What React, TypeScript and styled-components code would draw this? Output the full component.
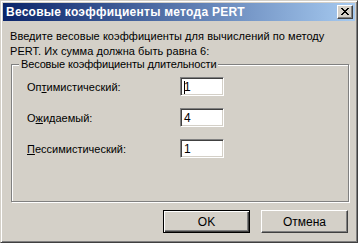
import React from 'react';
import styled, {createGlobalStyle} from "styled-components";

const Global = createGlobalStyle`
  html, body {
    margin: 0;
    padding: 0;
    background: #d4d0c8;
  }
  * {
    box-sizing: border-box;
  }
`
const Window = styled.div`
  width: 358px;
  height: 243px;
  background-color: #d4d0c8;
  border: 1px solid;
  border-color: #d4d0c8 #404040 #404040 #d4d0c8;
  box-shadow: inset 1px 1px 0 #fff, inset -1px -1px 0 #808080;
  padding: 2px;
  display: flex;
  flex-direction: column;
  font-family: "Liberation Sans", Arial, sans-serif;
  font-size: 11px;
  color: #000;
`
const TitleBar = styled.div`
  height: 18px;
  background: linear-gradient(to right, #0a246a, #a6caf0);
  display: flex;
  align-items: center;
  justify-content: space-between;
  padding: 0 2px 0 3px;
`
const Title = styled.span`
  color: #fff;
  font-weight: bold;
  font-size: 12px;
  letter-spacing: 0.25px;
`
const CloseButton = styled.div`
  width: 16px;
  height: 14px;
  background-color: #d4d0c8;
  border: 1px solid;
  border-color: #fff #404040 #404040 #fff;
  box-shadow: inset -1px -1px 0 #808080;
  display: flex;
  align-items: center;
  justify-content: center;
  padding: 0 1px 1px 0;
`
const Body = styled.div`
  flex: 1;
  display: flex;
  flex-direction: column;
  padding: 8px 6px 0 8px;
`
const Intro = styled.p`
  margin: 0 0 0 -1px;
  line-height: 15px;
  width: 330px;
  letter-spacing: 0.05px;
`
const GroupBox = styled.div`
  position: relative;
  margin-top: 5px;
  height: 138px;
  border: 1px solid #808080;
  box-shadow: inset 1px 1px 0 #fff, 1px 1px 0 #fff;
  padding: 12px 0 0 15px;
  display: flex;
  flex-direction: column;
  gap: 12px;
`
const Legend = styled.span`
  position: absolute;
  top: -8px;
  left: 7px;
  padding: 0 2px;
  background-color: #d4d0c8;
  line-height: 14px;
  letter-spacing: -0.15px;
`
const Row = styled.div`
  display: flex;
  align-items: center;
  height: 19px;
`
const Label = styled.label`
  width: 153px;
`
const Key = styled.span`
  text-decoration: underline;
`
const Edit = styled.div`
  width: 44px;
  height: 19px;
  background: #fff;
  border: 1px solid;
  border-color: #808080 #fff #fff #808080;
  box-shadow: inset 1px 1px 0 #404040, inset -1px -1px 0 #d4d0c8;
  padding: 1px 0 0 3px;
  display: flex;
  align-items: center;
  font-size: 12px;
`
const Caret = styled.span`
  display: inline-block;
  width: 1px;
  height: 13px;
  background: #000;
  margin-right: -1px;
`
const Buttons = styled.div`
  display: flex;
  justify-content: flex-end;
  gap: 11px;
  margin-top: 8px;
  padding-right: 1px;
`
const Button = styled.div<{$default?: boolean}>`
  width: 87px;
  height: 23px;
  display: flex;
  align-items: center;
  justify-content: center;
  font-size: 12px;
  background-color: #d4d0c8;
  border: 1px solid;
  border-color: ${p => p.$default ? '#000' : '#fff #404040 #404040 #fff'};
  box-shadow: ${p => p.$default
    ? 'inset 1px 1px 0 #fff, inset -1px -1px 0 #404040, inset -2px -2px 0 #808080'
    : 'inset -1px -1px 0 #808080'};
`

const App: React.FC = () => {
    return (
        <>
            <Global/>
            <Window>
                <TitleBar>
                    <Title>Весовые коэффициенты метода PERT</Title>
                    <CloseButton>
                        <svg width="8" height="7" viewBox="0 0 8 7" shapeRendering="crispEdges">
                            <path d="M0 0h2v1h-2zM6 0h2v1h-2zM1 1h2v1h-2zM5 1h2v1h-2zM2 2h4v1h-4zM3 3h2v1h-2zM2 4h4v1h-4zM1 5h2v1h-2zM5 5h2v1h-2zM0 6h2v1h-2zM6 6h2v1h-2z" fill="#000"/>
                        </svg>
                    </CloseButton>
                </TitleBar>
                <Body>
                    <Intro>Введите весовые коэффициенты для вычислений по методу PERT. Их сумма должна быть равна 6:</Intro>
                    <GroupBox>
                        <Legend>Весовые коэффициенты длительности</Legend>
                        <Row>
                            <Label>Оп<Key>т</Key>имистический:</Label>
                            <Edit><Caret/>1</Edit>
                        </Row>
                        <Row>
                            <Label>О<Key>ж</Key>идаемый:</Label>
                            <Edit>4</Edit>
                        </Row>
                        <Row>
                            <Label><Key>П</Key>ессимистический:</Label>
                            <Edit>1</Edit>
                        </Row>
                    </GroupBox>
                    <Buttons>
                        <Button $default>OK</Button>
                        <Button>Отмена</Button>
                    </Buttons>
                </Body>
            </Window>
        </>
    );
};
export default App;
